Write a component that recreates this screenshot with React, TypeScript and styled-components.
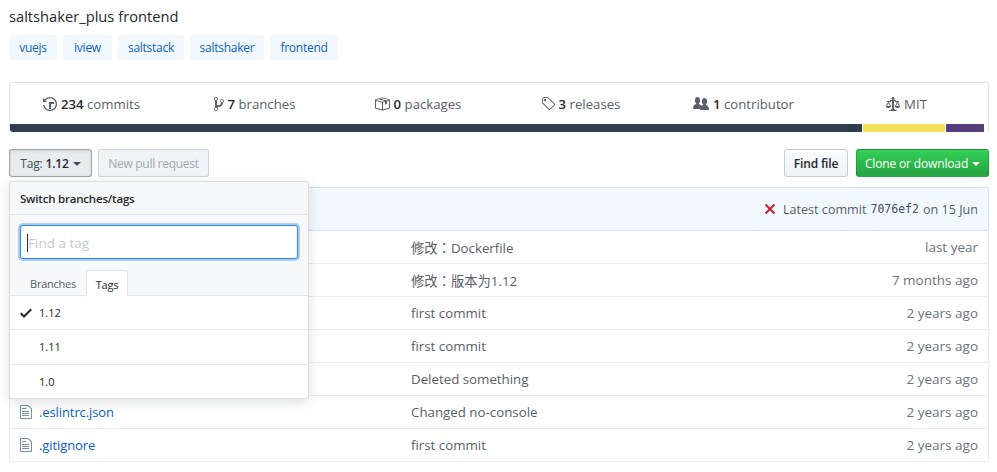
import React from 'react'
import styled, { createGlobalStyle } from 'styled-components'

const GlobalStyle = createGlobalStyle`
  html, body {
    margin: 0;
    background: #fff;
  }
  body {
    font-family: "Open Sans", "Noto Sans CJK TC", sans-serif;
    font-size: 13px;
    color: #24292e;
    overflow: hidden;
  }
`

const Page = styled.div`
  position: relative;
  width: 997px;
  height: 472px;
  box-sizing: border-box;
  padding: 8px 8px 0 9px;
  overflow: hidden;
`

const Description = styled.div`
  height: 18px;
  font-size: 14.7px;
  line-height: 16px;
  color: #24292e;
`

const Topics = styled.div`
  display: flex;
  gap: 6px;
  margin-top: 9px;
`

const Topic = styled.a<{ $w: number }>`
  width: ${p => p.$w}px;
  height: 25px;
  line-height: 25px;
  text-align: center;
  font-size: 12px;
  letter-spacing: -0.25px;
  color: #0b60c4;
  background: #f1f8ff;
  border-radius: 3px;
`

const Numbers = styled.div`
  margin-top: 22px;
  height: 50px;
  box-sizing: border-box;
  border: 1px solid #dfe2e5;
  border-bottom: 0;
  border-radius: 3px;
  display: flex;
  flex-direction: column;
`

const Summary = styled.div`
  flex: 1;
  display: grid;
  grid-template-columns: repeat(6, 1fr);
`

const Stat = styled.div`
  display: flex;
  align-items: center;
  justify-content: center;
  gap: 4px;
  font-size: 13.2px;
  color: #586069;

  svg {
    fill: #586069;
    flex: none;
  }

  b {
    font-weight: 600;
    color: #24292e;
  }
`

const LangBar = styled.div`
  display: flex;
  gap: 1px;
  height: 8px;
  border-radius: 0 0 3px 3px;
  overflow: hidden;
`

const LangPart = styled.span<{ $w: number; $c: string }>`
  width: ${p => p.$w}px;
  background: ${p => p.$c};
`

const Toolbar = styled.div`
  display: flex;
  align-items: center;
  gap: 6px;
  margin-top: 17px;
`

const Spacer = styled.div`
  flex: 1;
`

const Btn = styled.button<{ $w: number }>`
  width: ${p => p.$w}px;
  height: 28px;
  padding: 0;
  font-family: inherit;
  font-size: 12px;
  font-weight: 600;
  letter-spacing: -0.15px;
  color: #24292e;
  border: 1px solid rgba(27, 31, 35, 0.2);
  border-radius: 3px;
  background: linear-gradient(180deg, #fafbfc, #eff3f6 90%);
`

const TagBtn = styled(Btn)`
  font-weight: 400;
  color: #444d56;
  background: #e9ecef;
  border-color: rgba(27, 31, 35, 0.35);
  box-shadow: inset 0 1px 3px rgba(27, 31, 35, 0.15);

  b {
    font-weight: 600;
    color: #24292e;
  }
`

const DisabledBtn = styled(Btn)`
  font-weight: 400;
  letter-spacing: -0.3px;
  color: #a3a8ad;
  background: #eff3f6;
  border-color: rgba(27, 31, 35, 0.15);
`

const GreenBtn = styled(Btn)`
  margin-left: 2px;
  font-weight: 400;
  letter-spacing: -0.15px;
  color: #fff;
  background: linear-gradient(180deg, #34d058, #28a745 90%);
`

const Caret = styled.i`
  display: inline-block;
  margin-left: 4px;
  vertical-align: 2px;
  border: 4px solid transparent;
  border-top-color: currentColor;
  border-bottom: 0;
`

const Tease = styled.div`
  margin-top: 10px;
  height: 44px;
  box-sizing: border-box;
  display: flex;
  align-items: center;
  justify-content: flex-end;
  padding-right: 10px;
  font-size: 12.6px;
  color: #586069;
  background: #f1f8ff;
  border: 1px solid #c8e1ff;
  border-radius: 3px 3px 0 0;

  svg {
    fill: #cb2431;
    margin-right: 7px;
  }

  code {
    font-family: "DejaVu Sans Mono", "Liberation Mono", monospace;
    font-size: 11.5px;
    margin: 0 4px;
    color: #444d56;
  }
`

const FileTable = styled.div`
  border-left: 1px solid #eaecef;
  border-right: 1px solid #eaecef;
`

const FileRow = styled.div`
  height: 33px;
  box-sizing: border-box;
  display: grid;
  grid-template-columns: 391px 1fr auto;
  align-items: center;
  padding: 0 10px;
  border-bottom: 1px solid #eaecef;
`

const FileName = styled.div`
  display: flex;
  align-items: center;
  gap: 7px;
  font-size: 13px;
  letter-spacing: -0.1px;
  color: #0b60c4;

  svg {
    fill: rgba(3, 47, 98, 0.55);
  }
`

const Message = styled.div`
  font-size: 13.3px;
  color: #586069;
`

const Age = styled.div`
  font-size: 13.5px;
  color: #6a737d;
`

const Menu = styled.div`
  position: absolute;
  left: 9px;
  top: 181px;
  width: 300px;
  height: 218px;
  box-sizing: border-box;
  display: flex;
  flex-direction: column;
  background: #fff;
  border: 1px solid rgba(27, 31, 35, 0.15);
  border-radius: 3px;
  box-shadow: 0 3px 12px rgba(27, 31, 35, 0.15);
  z-index: 2;
`

const MenuHead = styled.div`
  height: 32px;
  line-height: 34px;
  padding-left: 10px;
  font-size: 11.5px;
  font-weight: 600;
  letter-spacing: -0.2px;
  background: #f6f8fa;
  border-bottom: 1px solid #e1e4e8;
  border-radius: 3px 3px 0 0;
`

const MenuFilter = styled.div`
  background: #f6f8fa;
  padding: 10px 10px 0;
  height: 80px;
  box-sizing: border-box;
  position: relative;
`

const FilterInput = styled.div`
  height: 34px;
  box-sizing: border-box;
  padding-left: 6px;
  line-height: 34px;
  font-size: 13.5px;
  color: #c6cacd;
  background: #fff;
  border: 1px solid #2188ff;
  border-radius: 3px;
  box-shadow: 0 0 0 2px rgba(3, 102, 214, 0.3);

  &::before {
    content: '';
    display: inline-block;
    width: 1px;
    height: 18px;
    vertical-align: -4px;
    background: #24292e;
  }
`

const Tabs = styled.div`
  position: absolute;
  left: 10px;
  right: 0;
  bottom: 0;
  display: flex;
  height: 25px;
  font-size: 11px;
`

const TabItem = styled.div<{ $active?: boolean }>`
  width: ${p => (p.$active ? 42 : 66)}px;
  box-sizing: border-box;
  text-align: center;
  line-height: 27px;
  letter-spacing: -0.25px;
  color: ${p => (p.$active ? '#24292e' : '#586069')};
  background: ${p => (p.$active ? '#fff' : 'transparent')};
  border: ${p => (p.$active ? '1px solid #e1e4e8' : '0')};
  border-bottom: 0;
  border-radius: 3px 3px 0 0;
  margin-bottom: ${p => (p.$active ? '-1px' : '0')};
  position: relative;
`

const TagList = styled.div`
  flex: 1;
  border-top: 1px solid #e1e4e8;
  display: flex;
  flex-direction: column;
`

const TagItem = styled.div<{ $first?: boolean }>`
  flex: 1;
  display: flex;
  align-items: center;
  gap: 7px;
  padding-left: 10px;
  font-size: 11px;
  font-weight: 400;
  color: #24292e;
  border-top: ${p => (p.$first ? '0' : '1px solid #eaecef')};

  svg {
    fill: #24292e;
  }
`

const NoCheck = styled.span`
  width: 12px;
`

const HistoryIcon = () => (
  <svg width="14" height="16" viewBox="0 0 14 16">
    <path d="M8 13H6V6h5v2H8v5zM7 1C4.81 1 2.87 2.02 1.59 3.59L0 2v4h4L2.5 4.5C3.55 3.17 5.17 2.3 7 2.3c3.14 0 5.7 2.56 5.7 5.7s-2.56 5.7-5.7 5.7A5.68 5.68 0 0 1 1.4 9H.08c.5 3.39 3.39 6 6.92 6 3.86 0 7-3.14 7-7s-3.14-7-7-7z" />
  </svg>
)

const BranchIcon = () => (
  <svg width="10" height="16" viewBox="0 0 10 16">
    <path d="M10 5c0-1.11-.89-2-2-2a1.993 1.993 0 0 0-1 3.72v.3c-.02.52-.23.98-.63 1.38-.4.4-.86.61-1.38.63-.83.02-1.48.16-2 .45V4.72a1.993 1.993 0 0 0-1-3.72C.88 1 0 1.89 0 3a2 2 0 0 0 1 1.72v6.56c-.59.35-1 .99-1 1.72 0 1.11.89 2 2 2 1.11 0 2-.89 2-2 0-.53-.2-1-.53-1.36.09-.06.48-.41.59-.47.25-.11.56-.17.94-.17 1.05-.05 1.95-.45 2.75-1.25S8.95 7.77 9 6.73h-.02C9.59 6.37 10 5.73 10 5zM2 1.8c.66 0 1.2.55 1.2 1.2 0 .65-.55 1.2-1.2 1.2C1.35 4.2.8 3.65.8 3c0-.65.55-1.2 1.2-1.2zm0 12.41c-.66 0-1.2-.55-1.2-1.2 0-.65.55-1.2 1.2-1.2.65 0 1.2.55 1.2 1.2 0 .65-.55 1.2-1.2 1.2zm6-8c-.66 0-1.2-.55-1.2-1.2 0-.65.55-1.2 1.2-1.2.65 0 1.2.55 1.2 1.2 0 .65-.55 1.2-1.2 1.2z" />
  </svg>
)

const PackageIcon = () => (
  <svg width="16" height="16" viewBox="0 0 16 16">
    <path d="M1 4.27v7.47c0 .45.3.84.75.97l6.5 1.73c.16.05.34.05.5 0l6.5-1.73c.45-.13.75-.52.75-.97V4.27c0-.45-.3-.84-.75-.97l-6.5-1.74a1.4 1.4 0 0 0-.5 0L1.75 3.3c-.45.13-.75.52-.75.97zm7 9.09l-6-1.59V5l6 1.61v6.75zM2 4l2.5-.67L11 5.06l-2.5.67L2 4zm13 7.77l-6 1.59V6.61l2-.55V8.5l2-.53V5.53L15 5v6.77zm-2-7.24L6.5 2.8l2-.53L15 4l-2 .53z" />
  </svg>
)

const TagIcon = () => (
  <svg width="14" height="16" viewBox="0 0 14 16">
    <path d="M7.73 1.73C7.26 1.26 6.62 1 5.96 1H3.5C2.13 1 1 2.13 1 3.5v2.47c0 .66.27 1.3.73 1.77l6.06 6.06c.39.39 1.02.39 1.41 0l4.59-4.59a.996.996 0 0 0 0-1.41L7.73 1.73zM2.38 7.09c-.31-.3-.47-.7-.47-1.13V3.5c0-.88.72-1.59 1.59-1.59h2.47c.42 0 .83.16 1.13.47l6.14 6.13-4.73 4.73-6.13-6.15zM3.01 3h2v2H3V3h.01z" />
  </svg>
)

const PeopleIcon = () => (
  <svg width="16" height="16" viewBox="0 0 16 16">
    <path d="M16 12.999c0 .439-.45 1-1 1H7.995c-.539 0-.994-.447-.995-.999H1c-.54 0-1-.561-1-1 0-2.634 3-4 3-4s.229-.409 0-1c-.841-.621-1.058-.59-1-3 .058-2.419 1.367-3 2.5-3s2.442.58 2.5 3c.058 2.41-.159 2.379-1 3-.229.59 0 1 0 1s1.549.711 2.42 2.088C9.196 9.369 10 8.999 10 8.999s.229-.409 0-1c-.841-.62-1.058-.59-1-3 .058-2.419 1.367-3 2.5-3s2.437.581 2.495 3c.059 2.41-.158 2.38-1 3-.229.59 0 1 0 1s3.005 1.366 3.005 4z" />
  </svg>
)

const LawIcon = () => (
  <svg width="14" height="16" viewBox="0 0 14 16">
    <path d="M7 4c-.83 0-1.5-.67-1.5-1.5S6.17 1 7 1s1.5.67 1.5 1.5S7.83 4 7 4zm7 6c0 1.11-.89 2-2 2h-1c-1.11 0-2-.89-2-2l2-4h-1c-.55 0-1-.45-1-1H8v8c.42 0 1 .45 1 1h1c.42 0 1 .45 1 1H3c0-.55.58-1 1-1h1c0-.55.58-1 1-1h.03L6 5H5c0 .55-.45 1-1 1H3l2 4c0 1.11-.89 2-2 2H2c-1.11 0-2-.89-2-2l2-4H1V5h3c0-.55.45-1 1-1h4c.55 0 1 .45 1 1h3v1h-1l2 4zM2.5 7L1 10h3L2.5 7zM13 10l-1.5-3L10 10h3z" />
  </svg>
)

const FileIcon = () => (
  <svg width="12" height="16" viewBox="0 0 12 16">
    <path d="M6 5H2V4h4v1zM2 8h7V7H2v1zm0 2h7V9H2v1zm0 2h7v-1H2v1zm10-7.5V14c0 .55-.45 1-1 1H1c-.55 0-1-.45-1-1V2c0-.55.45-1 1-1h7.5L12 4.5zM11 5L8 2H1v12h10V5z" />
  </svg>
)

const XIcon = () => (
  <svg width="12" height="16" viewBox="0 0 12 16">
    <path d="M7.48 8l3.75 3.75-1.48 1.48L6 9.48l-3.75 3.75-1.48-1.48L4.52 8 .77 4.25l1.48-1.48L6 6.52l3.75-3.75 1.48 1.48L7.48 8z" />
  </svg>
)

const CheckIcon = () => (
  <svg width="12" height="16" viewBox="0 0 12 16">
    <path d="M12 5l-8 8-4-4 1.5-1.5L4 10l6.5-6.5L12 5z" />
  </svg>
)

const topics = [
  { name: 'vuejs', w: 48 },
  { name: 'iview', w: 49 },
  { name: 'saltstack', w: 66 },
  { name: 'saltshaker', w: 74 },
  { name: 'frontend', w: 68 },
]

const files = [
  { name: '', msg: '修改：Dockerfile', age: 'last year' },
  { name: '', msg: '修改：版本为1.12', age: '7 months ago' },
  { name: '', msg: 'first commit', age: '2 years ago' },
  { name: '', msg: 'first commit', age: '2 years ago' },
  { name: '', msg: 'Deleted something', age: '2 years ago' },
  { name: '.eslintrc.json', msg: 'Changed no-console', age: '2 years ago' },
  { name: '.gitignore', msg: 'first commit', age: '2 years ago' },
]

export default function App() {
  return (
    <Page>
      <GlobalStyle />
      <Description>saltshaker_plus frontend</Description>
      <Topics>
        {topics.map(t => (
          <Topic key={t.name} $w={t.w}>{t.name}</Topic>
        ))}
      </Topics>

      <Numbers>
        <Summary>
          <Stat><HistoryIcon /><span><b>234</b> commits</span></Stat>
          <Stat><BranchIcon /><span><b>7</b> branches</span></Stat>
          <Stat><PackageIcon /><span><b>0</b> packages</span></Stat>
          <Stat><TagIcon /><span><b>3</b> releases</span></Stat>
          <Stat><PeopleIcon /><span><b>1</b> contributor</span></Stat>
          <Stat><LawIcon /><span>MIT</span></Stat>
        </Summary>
        <LangBar>
          <LangPart $w={852} $c="#2c3e50" />
          <LangPart $w={82} $c="#f1e05a" />
          <LangPart $w={38} $c="#563d7c" />
        </LangBar>
      </Numbers>

      <Toolbar>
        <TagBtn $w={83}>Tag: <b>1.12</b><Caret /></TagBtn>
        <DisabledBtn $w={111}>New pull request</DisabledBtn>
        <Spacer />
        <Btn $w={64}>Find file</Btn>
        <GreenBtn $w={133}>Clone or download<Caret /></GreenBtn>
      </Toolbar>

      <Tease>
        <XIcon />
        Latest commit <code>7076ef2</code> on 15 Jun
      </Tease>

      <FileTable>
        {files.map((f, i) => (
          <FileRow key={i}>
            <FileName>
              {f.name && <FileIcon />}
              {f.name}
            </FileName>
            <Message>{f.msg}</Message>
            <Age>{f.age}</Age>
          </FileRow>
        ))}
      </FileTable>

      <Menu>
        <MenuHead>Switch branches/tags</MenuHead>
        <MenuFilter>
          <FilterInput>Find a tag</FilterInput>
          <Tabs>
            <TabItem>Branches</TabItem>
            <TabItem $active>Tags</TabItem>
          </Tabs>
        </MenuFilter>
        <TagList>
          <TagItem $first><CheckIcon />1.12</TagItem>
          <TagItem><NoCheck />1.11</TagItem>
          <TagItem><NoCheck />1.0</TagItem>
        </TagList>
      </Menu>
    </Page>
  )
}
